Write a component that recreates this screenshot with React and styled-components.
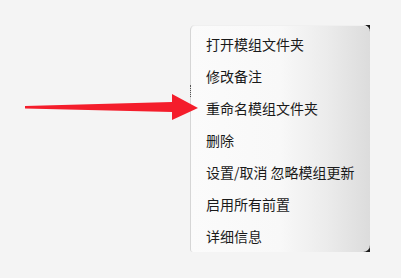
import React from "react";
import styled, { createGlobalStyle } from "styled-components";

const Global = createGlobalStyle`
  html, body { margin: 0; padding: 0; background: #f4f4f4; }
  #root { width: 401px; height: 278px; overflow: hidden; }
`;

const Page = styled.div`
  position: relative;
  width: 401px;
  height: 278px;
  box-sizing: border-box;
  padding: 25px 0 0 190px;
  background: #f4f4f4;
`;

const MenuFrame = styled.div`
  width: 180px;
  background: linear-gradient(to right, transparent 0, transparent 172px, #1c1c1c 172px);
`;

const Menu = styled.ul`
  position: relative;
  list-style: none;
  margin: 0;
  padding: 3px 0 0;
  box-sizing: border-box;
  width: 180px;
  border-left: 1px solid #d6d6d6;
  border-radius: 5px 7px 7px 3px;
  background: linear-gradient(to right, #fbfbfb 0%, #f8f8f8 50%, #ececec 75%, #dcdcdc 100%);
  box-shadow: inset 0 1px 0 #f0f0f0;

  &::before {
    content: "";
    position: absolute;
    left: -1px;
    top: 60px;
    height: 12px;
    border-left: 1px dotted #555;
  }
`;

const Item = styled.li`
  height: 32px;
  display: flex;
  align-items: center;
  padding-left: 15px;
  font-family: "Noto Sans CJK SC", "Noto Sans", sans-serif;
  font-size: 14px;
  color: #1a1a1a;
  white-space: nowrap;
`;

const Arrow = styled.svg`
  position: absolute;
  left: 0;
  top: 0;
`;

const items = [
  "打开模组文件夹",
  "修改备注",
  "重命名模组文件夹",
  "删除",
  "设置/取消 忽略模组更新",
  "启用所有前置",
  "详细信息",
];

export default function App() {
  return (
    <>
      <Global />
      <Page>
        <MenuFrame>
          <Menu>
            {items.map((t) => (
              <Item key={t}>{t}</Item>
            ))}
          </Menu>
        </MenuFrame>
        <Arrow width="401" height="278" viewBox="0 0 401 278">
          <polygon
            points="25,106 172,102 172,94 198,108 172,120 172,112 25,108.5"
            fill="#f41d2b"
          />
        </Arrow>
      </Page>
    </>
  );
}
